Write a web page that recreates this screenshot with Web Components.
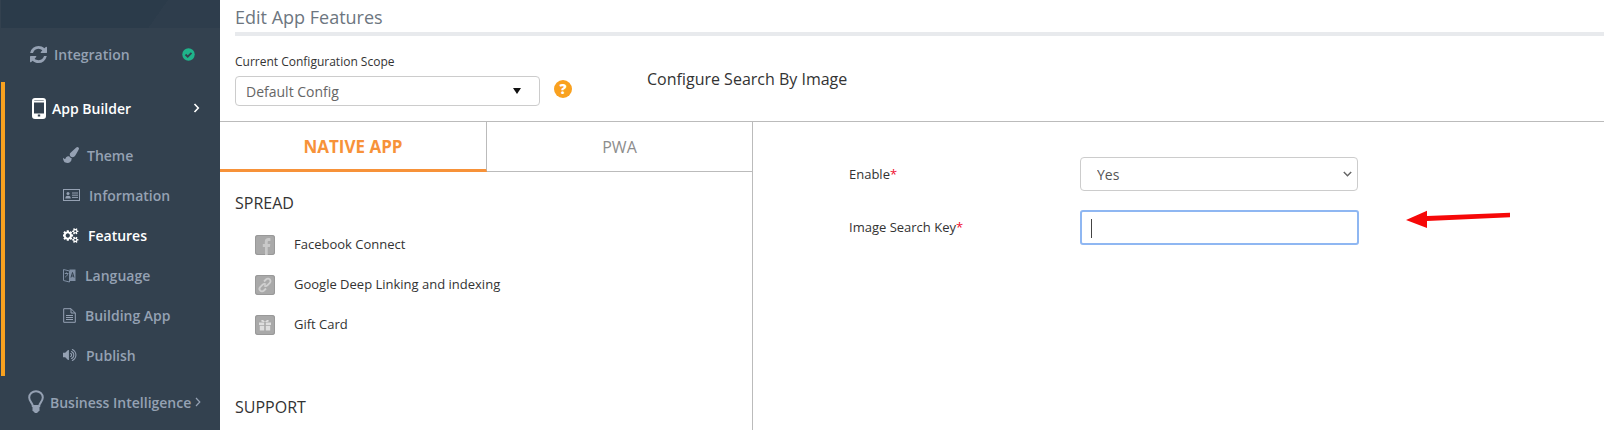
<!DOCTYPE html>
<html>
<head>
<meta charset="utf-8">
<title>Edit App Features</title>
<style>
  html, body { margin: 0; padding: 0; background: #fff; }
  body { font-family: "Open Sans", "Liberation Sans", sans-serif; overflow: hidden; }
  svg { display: block; }
</style>
</head>
<body>
<app-shell>
  <side-bar slot="side">
    <nav-item h="54" icon-x="30" text-x="54" tone="muted" size="14">
      <svg slot="icon" width="17" height="17" viewBox="128 128 1536 1536" fill="#95a1b3"><path d="M1639 1056q0 5-1 7-64 268-268 434.500t-478 166.500q-146 0-282.500-55t-243.500-157l-129 129q-19 19-45 19t-45-19-19-45v-448q0-26 19-45t45-19h448q26 0 45 19t19 45-19 45l-137 137q71 66 161 102t187 36q134 0 250-65t186-179q11-17 53-117 8-23 30-23h192q13 0 22.500 9.500t9.500 22.500zm25-800v448q0 26-19 45t-45 19h-448q-26 0-45-19t-19-45 19-45l138-138q-148-137-349-137-134 0-250 65t-186 179q-11 17-53 117-8 23-30 23h-199q-13 0-22.500-9.500t-9.500-22.500v-7q65-268 270-434.500t480-166.500q146 0 284 55.500t245 156.500l130-129q19-19 45-19t45 19 19 45z"/></svg>
      Integration
      <svg slot="end" style="margin-right:25px" width="13" height="13" viewBox="0 0 13 13"><circle cx="6.500" cy="6.500" r="6.200" fill="#1fb48a"/><path d="M3.500 6.500l2.200 2.200 3.800-3.900" fill="none" stroke="#33414f" stroke-width="1.800"/></svg>
    </nav-item>
    <nav-group>
      <nav-item h="54" icon-x="32" text-x="52" tone="active" size="14" weight="600">
        <svg slot="icon" width="14" height="21" viewBox="0 0 14 21"><rect x="1" y="1" width="12" height="19" rx="2" fill="#33414f" stroke="#fff" stroke-width="2"/><rect x="1" y="2.500" width="12" height="2" fill="#fff"/><rect x="1" y="15.500" width="12" height="4" fill="#fff"/><rect x="5.800" y="16.500" width="2.400" height="2" fill="#33414f"/></svg>
        App Builder
        <svg slot="end" style="margin-right:20px" width="7" height="10" viewBox="0 0 7 10"><path d="M1.500 1l3.800 4-3.800 4" fill="none" stroke="#fff" stroke-width="1.600"/></svg>
      </nav-item>
      <nav-item h="40" icon-x="63" text-x="87" tone="muted" size="14">
        <svg slot="icon" width="16" height="16" viewBox="0 0 1792 1792" fill="#95a1b3"><path d="M1615 0q70 0 122.500 46.500t52.500 116.500q0 63-45 151-332 629-465 752-97 91-218 91-126 0-216.500-92.500t-90.500-219.500q0-128 92-212l638-579q59-54 130-54zm-909 1034q39 76 106.500 130t150.500 76l1 71q4 213-129.500 347t-348.500 134q-123 0-218-46.500t-152.500-127.500-86.500-183-29-220q7 5 41 30t62 44.500 59 36.500 46 17q41 0 55-37 25-66 57.500-112.500t69.500-76 88-47.500 103-25.500 125-10.500z"/></svg>
        Theme
      </nav-item>
      <nav-item h="40" icon-x="63" text-x="89" tone="muted" size="14">
        <svg slot="icon" width="17" height="12" viewBox="0 0 17 12"><rect x=".5" y=".5" width="16" height="11" fill="none" stroke="#95a1b3"/><circle cx="5" cy="4.500" r="1.500" fill="#95a1b3"/><path d="M2.300 9.500c0-2 1-2.700 2.700-2.700s2.700.7 2.700 2.700z" fill="#95a1b3"/><path d="M9 4h6M9 6.200h6M9 8.400h6" stroke="#95a1b3"/></svg>
        Information
      </nav-item>
      <nav-item h="40" icon-x="63" text-x="88" tone="active" size="14" weight="600">
        <svg slot="icon" width="16" height="15" viewBox="0 0 1920 1792" fill="#fff"><path d="M832 896q0-106-75-181t-181-75-181 75-75 181 75 181 181 75 181-75 75-181zm768 512q0-52-38-90t-90-38-90 38-38 90q0 53 37.500 90.500t90.500 37.500 90.500-37.500 37.500-90.500zm0-1024q0-52-38-90t-90-38-90 38-38 90q0 53 37.500 90.500t90.500 37.500 90.500-37.500 37.500-90.500zm-384 421v185q0 10-7 19.500t-16 10.500l-155 24q-11 35-32 76 34 48 90 115 7 11 7 20 0 12-7 19-23 30-82.500 89.500t-78.500 59.500q-11 0-21-7l-115-90q-37 19-77 31-11 108-23 155-7 24-30 24h-186q-11 0-20-7.500t-10-17.500l-23-153q-34-10-75-31l-118 89q-7 7-20 7-11 0-21-8-144-133-144-160 0-9 7-19 10-14 41-53t47-61q-23-44-35-82l-152-24q-10-1-17-9.500t-7-19.500v-185q0-10 7-19.500t16-10.500l155-24q11-35 32-76-34-48-90-115-7-11-7-20 0-12 7-20 22-30 82-89t79-59q11 0 21 7l115 90q34-18 77-32 11-108 23-154 7-24 30-24h186q11 0 20 7.500t10 17.500l23 153q34 10 75 31l118-89q8-7 20-7 11 0 21 8 144 133 144 160 0 8-7 19-12 16-42 54t-45 60q23 48 34 82l152 23q10 2 17 10.500t7 19.500zm640 533v140q0 16-149 31-12 27-30 52 51 113 51 138 0 4-4 7-122 71-124 71-8 0-46-47t-52-68q-20 2-30 2t-30-2q-14 21-52 68t-46 47q-2 0-124-71-4-3-4-7 0-25 51-138-18-25-30-52-149-15-149-31v-140q0-16 149-31 13-29 30-52-51-113-51-138 0-4 4-7 4-2 35-20t59-34 30-16q8 0 46 46.500t52 67.500q20-2 30-2t30 2q51-71 92-112l6-2q4 0 124 70 4 3 4 7 0 25-51 138 17 23 30 52 149 15 149 31zm0-1024v140q0 16-149 31-12 27-30 52 51 113 51 138 0 4-4 7-122 71-124 71-8 0-46-47t-52-68q-20 2-30 2t-30-2q-14 21-52 68t-46 47q-2 0-124-71-4-3-4-7 0-25 51-138-18-25-30-52-149-15-149-31v-140q0-16 149-31 13-29 30-52-51-113-51-138 0-4 4-7 4-2 35-20t59-34 30-16q8 0 46 46.500t52 67.500q20-2 30-2t30 2q51-71 92-112l6-2q4 0 124 70 4 3 4 7 0 25-51 138 17 23 30 52 149 15 149 31z"/></svg>
        Features
      </nav-item>
      <nav-item h="40" icon-x="63" text-x="85" tone="muted" size="14">
        <svg slot="icon" width="13" height="15" viewBox="0 0 13 15"><path d="M.5 1.500L6.500 3v11L.5 12.500z" fill="none" stroke="#7f8ea3"/><path d="M6.500 1.500h6v11.500h-6z" fill="#7f8ea3"/><path d="M8 9.500l1.500-5 1.500 5M8.500 8h2" stroke="#33414f" fill="none"/><path d="M1.800 5.500h3.500M3.500 4.500v1.500M2.300 9c1.300-.8 2.200-2 2.500-3.500" stroke="#7f8ea3" fill="none"/></svg>
        Language
      </nav-item>
      <nav-item h="40" icon-x="63" text-x="85" tone="muted" size="14">
        <svg slot="icon" width="13" height="15" viewBox="0 0 13 15" fill="none" stroke="#95a1b3"><path d="M.7.700h7.300l4.300 4.300v9.300H.7z"/><path d="M8 .7V5h4.300M3 7.500h7M3 9.500h7M3 11.500h7"/></svg>
        Building App
      </nav-item>
      <nav-item h="40" icon-x="63" text-x="86" tone="muted" size="14">
        <svg slot="icon" width="14" height="14" viewBox="128 128 1664 1536" fill="#95a1b3"><path d="M832 352v1088q0 26-19 45t-45 19-45-19l-333-333h-262q-26 0-45-19t-19-45v-384q0-26 19-45t45-19h262l333-333q19-19 45-19t45 19 19 45zm384 544q0 76-42.500 141.500t-112.500 93.500q-10 5-25 5-26 0-45-18.500t-19-45.500q0-21 12-35.500t29-25 34-23 29-36 12-56.500-12-56.500-29-36-34-23-29-25-12-35.500q0-27 19-45.500t45-18.500q15 0 25 5 70 27 112.500 93t42.500 142zm256 0q0 153-85 282.500t-225 188.500q-13 5-25 5-27 0-46-19t-19-45q0-39 39-59 56-29 76-44 74-54 115.500-135.500t41.500-173.500-41.500-173.500-115.500-135.500q-20-15-76-44-39-20-39-59 0-26 19-45t45-19q13 0 26 5 140 59 225 188.500t85 282.500zm256 0q0 230-127 422.500t-338 283.500q-13 5-26 5-26 0-45-19t-19-45q0-36 39-59 7-4 22.500-10.500t22.500-10.500q46-25 82-51 123-91 192-227t69-289-69-289-192-227q-36-26-82-51-7-4-22.500-10.500t-22.500-10.500q-39-23-39-59 0-26 19-45t45-19q13 0 26 5 211 91 338 283.500t127 422.500z"/></svg>
        Publish
      </nav-item>
    </nav-group>
    <nav-item h="54" icon-x="28" text-x="50" tone="muted" size="14">
      <svg slot="icon" width="16" height="24" viewBox="0 0 16 24"><path d="M4.800 16c0-3-3.600-4.600-3.600-8.400C1.200 4 4.300 1.200 8 1.200s6.800 2.800 6.800 6.400c0 3.800-3.600 5.400-3.600 8.400z" fill="none" stroke="#95a1b3" stroke-width="2"/><path d="M4.500 16.500h7v4l-1.500 1.500-1 1H7l-1-1-1.500-1.500z" fill="#95a1b3"/></svg>
      Business Intelligence
      <svg slot="after" style="margin-left:4px" width="6" height="10" viewBox="0 0 6 10"><path d="M1 1l3.800 4L1 9" fill="none" stroke="#95a1b3" stroke-width="1.200"/></svg>
    </nav-item>
  </side-bar>

  <page-head title="Edit App Features" scope-label="Current Configuration Scope" scope="Default Config" heading="Configure Search By Image"></page-head>

  <split-panel>
    <div slot="left">
      <tab-bar active="NATIVE APP" other="PWA"></tab-bar>
      <feature-list heading="SPREAD" pad="21">
        <feature-row label="Facebook Connect">
          <svg width="20" height="20" viewBox="0 0 20 20"><path d="M12.700 20v-8h2.200l.4-3h-2.600V7.300c0-.9.3-1.400 1.400-1.400h1.300V3.200c-.5 0-1.200-.1-2-.1-2.200 0-3.600 1.200-3.600 3.800V9H7.800v3h2.200v8z" fill="#c9c9c9"/></svg>
        </feature-row>
        <feature-row label="Google Deep Linking and indexing">
          <svg width="20" height="20" viewBox="0 0 20 20" fill="none" stroke="#d0d0d0" stroke-width="1.800"><path d="M9 6.500l2-2c1.200-1.200 2.800-1.200 3.800-.2s1 2.600-.2 3.800l-2 2c-1.100 1.100-2.400 1.200-3.400.4"/><path d="M11 13.500l-2 2c-1.200 1.200-2.800 1.200-3.800.2s-1-2.600.2-3.800l2-2c1.100-1.100 2.400-1.200 3.400-.4"/></svg>
        </feature-row>
        <feature-row label="Gift Card">
          <svg width="20" height="20" viewBox="0 0 20 20" fill="#dedede"><path d="M4 7.500h5.200v2.400H4zM10.800 7.500H16v2.400h-5.200zM4.800 10.800h4.400v4.700H4.800zM10.800 10.800h4.400v4.700h-4.400z"/><path d="M10 7C8.500 4.200 6 4.500 6.200 6c.1.800 1.800 1.100 3.800 1zm0 0c1.500-2.800 4-2.500 3.800-1-.1.800-1.800 1.100-3.800 1z"/></svg>
        </feature-row>
      </feature-list>
      <feature-list heading="SUPPORT" pad="52"></feature-list>
    </div>
    <config-form slot="right">
      <form-row label="Enable">
        <select>
          <option>Yes</option>
          <option>No</option>
        </select>
      </form-row>
      <form-row label="Image Search Key" focused></form-row>
    </config-form>
  </split-panel>

  <svg slot="over" width="110" height="22" viewBox="0 0 110 22" style="position:absolute;left:1404px;top:208px">
    <path d="M2 12L23 2.700V8L106 4.700V9.300L23 13V20z" fill="#f60808"/>
  </svg>
</app-shell>

<script>
class AppShell extends HTMLElement {
    constructor() {
        super();
        this.attachShadow({ mode: 'open' }).innerHTML = `
        <style>
            :host { display: grid; grid-template-columns: 220px 1fr; grid-template-rows: 121px 1fr; width: 1604px; height: 430px; overflow: hidden; position: relative; }
            ::slotted([slot="side"]) { grid-row: 1 / 3; }
        </style>
        <slot name="side"></slot>
        <slot></slot>
        <slot name="over"></slot>`;
    }
}

class SideBar extends HTMLElement {
    constructor() {
        super();
        this.attachShadow({ mode: 'open' }).innerHTML = `
        <style>
            :host { display: block; background: #33414f; color: #95a1b3; height: 430px; overflow: hidden; }
            .top { height: 28px; margin-left: 1px; background: linear-gradient(125deg, #2b3b4a 0 70%, #2e3d4c 70% 100%); }
        </style>
        <div class="top"></div>
        <slot></slot>`;
    }
}

class NavGroup extends HTMLElement {
    constructor() {
        super();
        this.attachShadow({ mode: 'open' }).innerHTML = `
        <style>
            :host { display: block; margin-left: 1px; border-left: 4px solid #f9a11f; }
            ::slotted(nav-item) { margin-left: -5px; }
        </style>
        <slot></slot>`;
    }
}

class NavItem extends HTMLElement {
    constructor() {
        super();
        const iconX = +this.getAttribute('icon-x');
        const textX = +this.getAttribute('text-x');
        const color = this.getAttribute('tone') === 'active' ? '#ffffff' : '#95a1b3';
        this.attachShadow({ mode: 'open' }).innerHTML = `
        <style>
            :host { display: flex; align-items: center; height: ${this.getAttribute('h')}px; box-sizing: border-box; padding: 0 0 2px ${iconX}px; color: ${color};
                font-size: ${this.getAttribute('size')}px; font-weight: ${this.getAttribute('weight') || 600}; white-space: nowrap; }
            .icon { width: ${textX - iconX}px; flex: none; }
            .end { margin-left: auto; }
        </style>
        <div class="icon"><slot name="icon"></slot></div>
        <slot></slot>
        <slot name="after"></slot>
        <div class="end"><slot name="end"></slot></div>`;
    }
}

class PageHead extends HTMLElement {
    constructor() {
        super();
        this.attachShadow({ mode: 'open' }).innerHTML = `
        <style>
            :host { display: block; height: 121px; padding-left: 15px; box-sizing: border-box; color: #333; }
            h1 { margin: 0; padding-top: 6px; height: 26px; font-size: 18px; font-weight: 400; line-height: 22px; color: #6d7680; box-sizing: border-box; }
            .rule { height: 4px; background: #e8eaed; margin-top: 6px; }
            .row { display: flex; align-items: flex-start; margin-top: 17px; }
            .scope { width: 305px; }
            label { display: block; font-size: 12px; line-height: 18px; color: #333; }
            .box { display: flex; align-items: center; justify-content: space-between; height: 30px; box-sizing: border-box; margin-top: 5px;
                border: 1px solid #ccc; border-radius: 4px; padding: 0 18px 0 10px; font-size: 14px; color: #666; }
            .tri { width: 0; height: 0; border-left: 4.500px solid transparent; border-right: 4.500px solid transparent; border-top: 6px solid #111; }
            .help { margin: 27px 0 0 14px; width: 18px; height: 18px; border-radius: 50%; background: #f9a11f; color: #fff;
                font-size: 14px; font-weight: 800; line-height: 18px; text-align: center; flex: none; }
            h2 { margin: 0 0 0 75px; font-size: 16px; font-weight: 400; line-height: 22px; color: #333; padding-top: 15px; }
        </style>
        <h1>${this.getAttribute('title')}</h1>
        <div class="rule"></div>
        <div class="row">
            <div class="scope">
                <label>${this.getAttribute('scope-label')}</label>
                <div class="box"><span>${this.getAttribute('scope')}</span><span class="tri"></span></div>
            </div>
            <div class="help">?</div>
            <h2>${this.getAttribute('heading')}</h2>
        </div>`;
    }
}

class SplitPanel extends HTMLElement {
    constructor() {
        super();
        this.attachShadow({ mode: 'open' }).innerHTML = `
        <style>
            :host { display: grid; grid-template-columns: 533px 1fr; border-top: 1px solid #bbb; height: 309px; overflow: hidden; }
            .left { border-right: 1px solid #bbb; }
        </style>
        <div class="left"><slot name="left"></slot></div>
        <div><slot name="right"></slot></div>`;
    }
}

class TabBar extends HTMLElement {
    constructor() {
        super();
        this.attachShadow({ mode: 'open' }).innerHTML = `
        <style>
            :host { display: grid; grid-template-columns: 267px 1fr; height: 50px; box-sizing: border-box; }
            div { display: flex; align-items: center; justify-content: center; box-sizing: border-box; }
            .on { font-size: 17px; color: #f79239; font-weight: 700; border-bottom: 3px solid #f79239; border-right: 1px solid #bbb; padding-top: 2px; }
            .off { font-size: 16px; color: #8d8d8d; border-bottom: 1px solid #bbb; }
        </style>
        <div class="on">${this.getAttribute('active')}</div>
        <div class="off">${this.getAttribute('other')}</div>`;
    }
}

class FeatureList extends HTMLElement {
    constructor() {
        super();
        this.attachShadow({ mode: 'open' }).innerHTML = `
        <style>
            :host { display: block; padding: ${this.getAttribute('pad')}px 0 0 15px; }
            h3 { margin: 0; font-size: 16px; font-weight: 400; line-height: 20px; color: #333; }
            .rows { display: flex; flex-direction: column; padding: 12px 0 0 20px; }
        </style>
        <h3>${this.getAttribute('heading')}</h3>
        <div class="rows"><slot></slot></div>`;
    }
}

class FeatureRow extends HTMLElement {
    constructor() {
        super();
        this.attachShadow({ mode: 'open' }).innerHTML = `
        <style>
            :host { display: flex; align-items: center; height: 40px; font-size: 13px; color: #333; }
            .ic { width: 20px; height: 20px; border-radius: 3px; background: #a9a9a9; box-shadow: inset 0 0 0 1px #999; margin-right: 19px; overflow: hidden; flex: none; }
            span { margin-top: -3px; }
        </style>
        <div class="ic"><slot></slot></div>
        <span>${this.getAttribute('label')}</span>`;
    }
}

class ConfigForm extends HTMLElement {
    constructor() {
        super();
        this.attachShadow({ mode: 'open' }).innerHTML = `
        <style>
            :host { display: flex; flex-direction: column; gap: 19px; padding: 35px 0 0 96px; }
        </style>
        <slot></slot>`;
    }
}

const chevron = "data:image/svg+xml,%3Csvg xmlns='http://www.w3.org/2000/svg' width='9' height='6'%3E%3Cpath d='M.8 1l3.700 3.700L8.200 1' fill='none' stroke='%23666' stroke-width='1.500'/%3E%3C/svg%3E";

class FormRow extends HTMLElement {
    constructor() {
        super();
        const focused = this.hasAttribute('focused');
        this.attachShadow({ mode: 'open' }).innerHTML = `
        <style>
            :host { display: grid; grid-template-columns: 231px 279px; align-items: center; font-size: 13px; color: #333; }
            label { margin-top: ${focused ? -2 : 0}px; }
            b { color: #f01030; font-weight: 400; }
            ::slotted(select) { appearance: none; width: 278px; height: 34px; border: 1px solid #ccc; border-radius: 4px;
                background: #fff url("${chevron}") no-repeat right 5px center;
                font: 14px "Open Sans", sans-serif; color: #555; padding: 0 16px; }
            .input { width: 279px; height: 35px; box-sizing: border-box; border: 2px solid #8fb7f2; border-radius: 3px; padding: 7px 0 0 9px; }
            .caret { display: block; width: 1px; height: 19px; background: #444; }
        </style>
        <label>${this.getAttribute('label')}<b>*</b></label>
        ${focused ? '<div class="input"><i class="caret"></i></div>' : '<slot></slot>'}`;
    }
}

customElements.define('app-shell', AppShell);
customElements.define('side-bar', SideBar);
customElements.define('nav-group', NavGroup);
customElements.define('nav-item', NavItem);
customElements.define('page-head', PageHead);
customElements.define('split-panel', SplitPanel);
customElements.define('tab-bar', TabBar);
customElements.define('feature-list', FeatureList);
customElements.define('feature-row', FeatureRow);
customElements.define('config-form', ConfigForm);
customElements.define('form-row', FormRow);
</script>
</body>
</html>
